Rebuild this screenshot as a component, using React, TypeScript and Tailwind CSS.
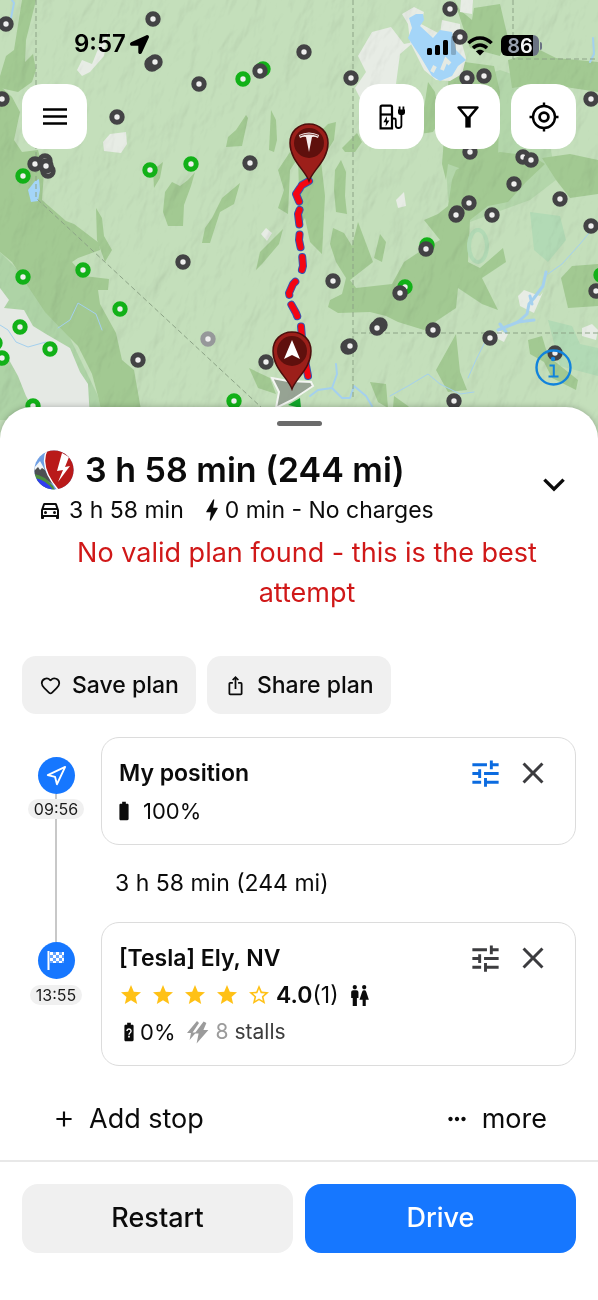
import type { ReactNode } from 'react'
import { Heart, Navigation } from 'lucide-react'
import { FaLocationArrow } from 'react-icons/fa'
import {
  MdBatteryFull,
  MdBatteryUnknown,
  MdBolt,
  MdClose,
  MdIosShare,
  MdMoreHoriz,
  MdAdd,
  MdOutlineDirectionsCar,
  MdStar,
  MdStarBorder,
  MdTune,
  MdWc,
} from 'react-icons/md'

const darkChargers = [
  [6, 24], [153, 19], [152, 64], [155, 62], [199, 84], [2, 99], [117, 117],
  [35, 164], [45, 161], [48, 171], [46, 166], [250, 163], [304, 52], [351, 78],
  [450, 9], [460, 37], [467, 78], [484, 76], [591, 99], [470, 152], [523, 157],
  [531, 160], [514, 184], [560, 199], [457, 213], [456, 215], [469, 203], [492, 215], [591, 226],
  [333, 281], [380, 325], [377, 328], [433, 330], [348, 347], [350, 346], [490, 338],
  [596, 291], [454, 401], [555, 353], [183, 262], [138, 360], [266, 362],
]

const greenChargers = [
  [243, 79], [263, 69], [23, 176], [150, 170], [191, 164], [427, 245], [405, 287],
  [601, 275], [83, 270], [23, 277], [120, 309], [20, 327], [50, 349], [-5, 343],
  [2, 358], [33, 406], [234, 401],
]

// these sit on top of a green one
const coveringChargers = [[260, 71], [426, 249], [400, 293]]

const forests = [
  'M0 86 L12 97 L20 112 L14 140 L22 152 L38 150 L44 172 L42 200 L66 221 L74 224 L82 230 L99 243 L100 250 L78 258 L72 262 L84 276 L109 279 L108 290 L98 290 L100 304 L116 333 L122 360 L134 370 L141 410 L103 420 L98 396 L92 374 L78 346 L70 338 L45 312 L25 282 L12 262 L0 252 Z',
  'M22 0 L36 0 L26 40 L25 62 L33 54 L36 70 L32 82 L18 92 L0 88 L0 76 L6 56 L14 50 Z',
  'M246 115 L248 118 L242 146 L226 147 L228 137 L236 130 Z',
  'M271 110 L276 120 L277 140 L274 152 L269 150 Z',
  'M163 162 L160 178 L154 188 L153 170 Z',
  'M172 182 L180 186 L188 180 L195 172 L191 186 L184 205 L183 226 L168 226 L163 212 L165 192 Z',
  'M222 198 L240 183 L234 204 L220 212 L210 243 L202 243 L205 228 L212 218 Z',
  'M278 170 L290 152 L298 158 L290 170 L288 214 L278 208 L284 190 Z',
  'M283 229 L279 244 L262 264 L256 270 L260 252 Z',
  'M96 208 L102 218 L104 236 L112 250 L105 262 L97 240 Z',
  'M298 156 L307 164 L320 152 L325 196 L322 254 L310 242 L305 218 L300 226 Z',
  'M312 140 L328 124 L336 122 L334 140 L324 156 Z',
  'M335 170 L341 160 L346 172 L345 196 L347 214 L336 212 L334 190 Z',
  'M357 133 L362 142 L355 152 L345 152 L342 148 Z',
  'M333 228 L344 233 L352 246 L358 222 L373 262 L350 280 L356 288 L392 284 L404 262 L422 250 L440 240 L424 220 L438 214 L448 206 L452 180 L456 170 L474 160 L500 152 L532 156 L545 164 L526 182 L508 202 L488 206 L470 220 L468 262 L480 268 L503 248 L506 262 L482 278 L498 310 L482 304 L458 288 L456 308 L438 320 L424 330 L398 322 L386 316 L370 312 L338 313 L328 307 L330 300 L342 294 L346 278 L336 262 L330 244 Z',
  'M380 234 L386 242 L382 262 L374 258 Z',
  'M428 82 L435 92 L440 120 L433 132 L420 134 L424 108 Z',
  'M454 0 L460 10 L472 20 L474 8 L500 4 L508 38 L500 56 L470 48 Z',
  'M508 60 L540 50 L556 58 L598 62 L598 92 L572 88 L540 84 L512 88 Z',
  'M542 158 L570 154 L598 160 L598 194 L570 198 L556 180 Z',
  'M450 60 L494 66 L500 92 L498 156 L470 172 L448 164 L446 180 L442 164 Z',
  'M561 278 L572 266 L598 264 L598 306 L568 308 Z',
  'M456 334 L460 372 L467 390 L448 392 L436 370 Z',
  'M528 340 L542 336 L548 356 L578 380 L576 390 L552 378 L544 362 L530 354 Z',
  'M370 382 L386 384 L388 408 L378 402 Z',
  'M394 396 L408 406 L420 420 L392 420 Z',
  'M249 368 L270 378 L276 394 L258 388 Z',
]

const saltFlats = [
  'M108 32 L104 56 L90 72 L82 76 L77 70 L82 60 L92 64 L100 44 Z',
  'M103 142 L110 134 L126 132 L127 144 L121 153 L104 151 Z',
  'M372 32 L391 27 L404 44 L414 42 L400 54 L396 84 L380 100 L360 98 L355 88 L366 72 L358 56 Z',
  'M402 14 L414 7 L424 12 L421 24 L440 34 L442 20 L460 24 L461 40 L466 58 L462 74 L450 81 L436 80 L424 70 L410 42 L408 24 Z',
  'M461 0 L473 0 L472 14 L460 12 Z',
  'M396 200 L404 192 L406 206 L398 208 Z',
  'M518 296 L524 290 L540 296 L543 292 L534 313 L520 306 Z',
  'M498 330 L508 334 L504 342 L496 338 Z',
  'M582 328 L592 324 L598 330 L596 340 L582 336 Z',
  'M261 234 L266 228 L272 233 L267 241 Z',
  'M0 288 L9 300 L4 308 L24 310 L33 326 L46 334 L70 348 L80 372 L88 384 L90 420 L40 420 L26 396 L18 376 L8 358 L0 352 Z',
]

const lakes = [
  'M409 18 L416 14 L423 14 L424 20 L420 26 L433 38 L440 30 L452 32 L456 50 L466 60 L458 66 L452 76 L440 81 L432 76 L420 56 L408 38 L412 28 Z',
  'M35 181 L39 179 L40 190 L38 201 L31 202 L28 190 Z',
]

function Terrain() {
  return (
    <>
      <defs>
        <filter id="relief" x="0" y="0" width="100%" height="100%">
          <feTurbulence type="fractalNoise" baseFrequency="0.06 0.025" numOctaves="4" seed="12" result="noise" />
          <feDiffuseLighting in="noise" surfaceScale="3" diffuseConstant="1.15" lightingColor="#ffffff">
            <feDistantLight azimuth="220" elevation="60" />
          </feDiffuseLighting>
        </filter>
      </defs>
      <rect width="598" height="440" fill="#c4dfbb" />
      <path d="M0 252 L30 282 L70 338 L98 396 L103 420 L0 420 Z" fill="#aed3a6" />
      <path d="M442 90 L500 70 L540 84 L556 180 L530 200 L470 222 L448 200 Z" fill="#b3d6aa" />
      <path d="M530 212 L560 216 L566 240 L548 262 L534 250 Z" fill="#b2dab5" />
      <path d="M548 320 L572 326 L580 344 L598 348 L598 376 L560 366 Z" fill="#b2dab5" />
      {forests.map((d) => <path key={d} d={d} fill="#a2c992" />)}
      {saltFlats.slice(0, -1).map((d) => <path key={d} d={d} fill="#e7ece5" />)}
      <ellipse cx="478" cy="246" rx="9" ry="16" fill="#c4dfbb" stroke="#b2dab5" strokeWidth="4" />
      <g className="mix-blend-multiply" opacity="0.28">
        <rect width="598" height="440" filter="url(#relief)" transform="rotate(14 299 220) scale(1.3) translate(-70 -60)" />
      </g>
      <path d={saltFlats[saltFlats.length - 1]} fill="#e5e9e4" />
      {lakes.map((d) => <path key={d} d={d} fill="#a4d5f8" />)}
      <path d="M442 70 L446 60 L450 64 M432 72 L435 66" fill="none" stroke="#e5eae3" strokeWidth="4" />
      <g fill="none" stroke="#a4d0ee" strokeLinecap="round" strokeLinejoin="round">
        <path d="M546 272 L543 286 L534 298 L529 304 L527 314 L518 322 L508 326 L498 330" strokeWidth="3" />
        <path d="M530 296 L532 304 M500 324 L506 332 M518 322 L534 320" strokeWidth="3" />
        <path d="M598 222 L580 244 L562 264 L548 274 M486 340 L476 360 L468 378" strokeWidth="1" />
        <path d="M336 364 L337 374 L332 388 L318 390 L310 396 M332 388 L342 398 L350 398 L354 386 L366 396 L372 406" strokeWidth="2" />
        <path d="M390 396 L408 386 L428 374 L440 384 L460 394 L474 392" strokeWidth="1" />
        <path d="M0 325 L8 330 L16 342 L28 347 L46 342 M58 328 L70 320 L78 303 L96 314 L102 330" strokeWidth="1" />
        <path d="M593 38 L594 54 L590 62 M12 0 L14 3 L11 18" strokeWidth="2" />
      </g>
      <path
        d="M36 0 V198 L262 408 M353 0 V400 M513 0 V59 H598 M353 333 H598"
        fill="none"
        stroke="#8ca386"
        strokeWidth="1"
        strokeDasharray="5 3"
      />
    </>
  )
}

function Charger({ x, y, color }: { x: number; y: number; color: string }) {
  return <circle cx={x} cy={y} r="5.2" fill="#efefef" stroke={color} strokeWidth="5" />
}

function PinShape() {
  return (
    <>
      <path
        d="M0 0 C-4 -11 -19 -21 -19 -38 C-19 -49 -11 -57 0 -57 C11 -57 19 -49 19 -38 C19 -21 4 -11 0 0 Z"
        fill="#9c1f1a"
        stroke="#4c0f0d"
        strokeWidth="1.5"
      />
      <circle cx="0" cy="-38" r="15" fill="#5f100d" />
    </>
  )
}

function RouteMap() {
  const route =
    'M309 181 L302 185 L296 194 L301 206 L298 214 L300 230 L299 240 L302 254 L303 266 L300 277 L293 284 L289 293 L291 304 L296 313 L301 326 L303 350 L308 376'
  return (
    <svg
      className="absolute inset-0 h-full w-full"
      viewBox="0 0 598 440"
      preserveAspectRatio="xMidYMin slice"
      aria-hidden="true"
    >
      <Terrain />
      {greenChargers.map(([x, y]) => <Charger key={`${x}-${y}`} x={x} y={y} color="#12b118" />)}
      {[...darkChargers, ...coveringChargers].map(([x, y]) => (
        <Charger key={`${x}-${y}`} x={x} y={y} color="#434345" />
      ))}
      <Charger x={208} y={339} color="#96989a" />
      <g fill="none" strokeLinecap="round" strokeLinejoin="round" strokeDasharray="9 3 15 9 15 10 13 10 13 14 15 10 13 11 200">
        <path d={route} stroke="#3454b4" strokeWidth="8" />
        <path d={route} stroke="#f40612" strokeWidth="6" />
      </g>
      <path
        d="M272 378 L288 381 L311 382 L313 386 L292 400 L276 408 L279 392 Z"
        fill="#8b938a"
        fillOpacity="0.8"
        stroke="#f3f5f2"
        strokeWidth="2"
      />
      <path d="M288 405 L300 398 L301 408 Z" fill="#12a52a" />
      <g transform="translate(309 181)">
        <PinShape />
        <path d="M-10 -46 Q0 -51 10 -46 L9 -43 Q5 -45 3 -44 L0 -29 L-3 -44 Q-5 -45 -9 -43 Z" fill="#f6eeee" />
        <path d="M-9 -45 Q0 -49 9 -45" fill="none" stroke="#5f100d" strokeWidth="0.8" />
      </g>
      <g transform="translate(292 389)">
        <PinShape />
        <path d="M0 -49 L8 -30 L0 -34 L-8 -30 Z" fill="#ffffff" />
      </g>
    </svg>
  )
}

function StatusBar() {
  return (
    <div className="relative flex h-11 items-end justify-between pr-14 pl-[74px] text-black">
      <div className="flex items-center gap-1">
        <span className="text-2xl leading-6 font-semibold">9:57</span>
        <FaLocationArrow size={19} />
      </div>
      <div className="flex items-center gap-2">
        <svg width="32" height="20" viewBox="0 0 32 20" aria-hidden="true">
          <rect x="0" y="12" width="5" height="7" rx="1.5" />
          <rect x="8" y="9" width="5" height="10" rx="1.5" />
          <rect x="16" y="4" width="5" height="15" rx="1.5" />
          <rect x="24" y="0" width="5" height="19" rx="1.5" fillOpacity="0.2" />
        </svg>
        <svg width="26" height="20" viewBox="0 0 26 20" fill="none" stroke="currentColor" strokeWidth="3.4" aria-hidden="true">
          <path d="M1.4 7.2 C8 0.2 18 0.2 24.6 7.2" />
          <path d="M6 12 C10 8 16 8 20 12" />
          <path d="M13 19.5 L8.8 15.3 C11 13.2 15 13.2 17.2 15.3 Z" fill="currentColor" stroke="none" />
        </svg>
        <div className="flex items-center gap-px">
          <span className="flex h-[21px] w-[38px] items-center justify-center rounded-md bg-linear-to-r from-black from-85% to-gray-500 to-85% text-xl leading-5 font-semibold text-gray-100">
            <span className="text-gray-400">8</span>6
          </span>
          <span className="h-2 w-[2px] rounded-r bg-gray-500" />
        </div>
      </div>
    </div>
  )
}

function MapButton({ label, children }: { label: string; children: ReactNode }) {
  return (
    <button
      type="button"
      aria-label={label}
      className="flex h-[65px] w-[65px] items-center justify-center rounded-[20px] bg-white text-black"
    >
      {children}
    </button>
  )
}

function ChargingPumpIcon() {
  return (
    <svg width="26" height="26" viewBox="0 0 26 26" fill="none" stroke="currentColor" strokeWidth="2.2">
      <path d="M1.6 24.4 V3 Q1.6 1.6 3 1.6 H11.6 Q13 1.6 13 3 V24.4 Z" />
      <path d="M2 10.5 H13" />
      <path d="M13 14.5 H15.4 Q16.8 14.5 16.8 16 V21.5 Q16.8 24 19.4 24 Q22.4 24 22.4 21.5 V10" strokeWidth="1.8" />
      <path d="M19 5.6 H26 V8.4 Q26 10.6 24 11 H21 Q19 10.6 19 8.4 Z" fill="currentColor" stroke="none" />
      <path d="M20.6 2.4 V7 M24.4 2.4 V7" strokeWidth="1.8" />
      <path d="M8 12.2 L4.4 18.2 H7 L6.6 22.4 L10.4 16.6 H7.8 Z" fill="currentColor" stroke="none" />
    </svg>
  )
}

function FunnelIcon() {
  return (
    <svg width="24" height="24" viewBox="0 0 24 24" fill="none" stroke="currentColor" strokeLinejoin="round">
      <path d="M2.6 2.5 H21.4 L12.6 13 H11.4 Z" strokeWidth="2.6" />
      <path d="M12 12.4 V22.6" strokeWidth="5.4" />
    </svg>
  )
}

function CrosshairIcon() {
  return (
    <svg width="30" height="30" viewBox="0 0 30 30" fill="none" stroke="currentColor" strokeWidth="2.4">
      <circle cx="15" cy="15" r="11" />
      <circle cx="15" cy="15" r="4.4" strokeWidth="2.8" />
      <path d="M15 0.5 V5 M15 25 V29.5 M0.5 15 H5 M25 15 H29.5" />
    </svg>
  )
}

function PlannerLogo() {
  return (
    <svg width="40" height="40" viewBox="0 0 40 40" aria-hidden="true">
      <clipPath id="logo-clip">
        <circle cx="20" cy="20" r="19.6" />
      </clipPath>
      <g clipPath="url(#logo-clip)">
        <rect width="40" height="40" fill="#6f9fe4" />
        <path d="M0 19 L5 14 L10 18 L14 26 L22 36 L14 31 L0 25 Z" fill="#4d5052" />
        <path d="M0 18 L6 11 L11 20 L8 18 L6 20 L4 17 L0 21 Z" fill="#f3f6f8" />
        <path d="M0 24 Q10 25 19 36 L21 40 L0 40 Z" fill="#4c8f3f" />
        <path d="M1 28 Q12 30 19 40 H6 Z" fill="#2f3df0" />
        <path d="M12 -1 H41 V41 H25 Q11 25 10.5 11 Q10.5 5 13 0 Z" fill="#b91a1a" stroke="#ffffff" strokeWidth="1.4" />
        <path d="M28 3 L23 21 L29 20 L24 32 L36 16 L31 17 L35 7 Z" fill="#ffffff" />
      </g>
    </svg>
  )
}

function CheckeredFlagIcon() {
  return (
    <svg width="18" height="19" viewBox="0 0 18 19" fill="#ffffff" aria-hidden="true">
      <rect x="0.5" y="0" width="2" height="19" />
      <path d="M3 1 H17 V12 H3 Z" opacity="0.35" />
      <path d="M3 1h3v3h-3z M9 1h3v3h-3z M15 1h2v3h-2z M6 4h3v3h-3z M12 4h3v3h-3z M3 7h3v3h-3z M9 7h3v3h-3z M15 7h2v3h-2z M6 10h3v2h-3z M12 10h3v2h-3z" />
    </svg>
  )
}

function DoubleBoltIcon() {
  return (
    <svg width="22" height="24" viewBox="0 0 22 24" fill="currentColor" aria-hidden="true">
      <path d="M10 1 L0 13 H4 L2.6 20 L9 12.4 H5.6 L12 3 Z" />
      <path d="M16.6 1.4 L7.6 13.4 H11.6 L9.6 23.4 L21.4 10 H16.4 L19.4 3 Z" />
    </svg>
  )
}

function StopActions({ active, name }: { active?: boolean; name: string }) {
  return (
    <div className="flex items-center gap-3">
      <button type="button" aria-label={`Settings for ${name}`} className={active ? 'text-[#0b6be0]' : 'text-[#3c3c3f]'}>
        <MdTune size={35} />
      </button>
      <button type="button" aria-label={`Remove ${name}`} className="text-[#3c3c3f]">
        <MdClose size={36} />
      </button>
    </div>
  )
}

function StopBadge({ children }: { children: ReactNode }) {
  return (
    <span className="flex h-[37px] w-[37px] shrink-0 items-center justify-center rounded-full bg-[#1677ff] text-white">
      {children}
    </span>
  )
}

function StopTime({ children }: { children: ReactNode }) {
  return <span className="rounded-full bg-[#f0f0f0] px-1.5 text-base leading-5 text-[#1b1b1b]">{children}</span>
}

export default function App() {
  return (
    <div className="flex min-h-screen flex-col bg-white font-['Inter',sans-serif] text-[#0b0b0b]">
      {/* Map */}
      <div className="relative flex h-[440px] flex-col overflow-hidden pt-3">
        <RouteMap />
        <StatusBar />
        <div className="relative mt-7 flex items-center justify-between px-[22px]">
          <MapButton label="Menu">
            <svg width="24" height="17" viewBox="0 0 24 17" stroke="currentColor" strokeWidth="2.4">
              <path d="M0 1.5 H24 M0 8.5 H24 M0 15.5 H24" />
            </svg>
          </MapButton>
          <div className="flex gap-[11px]">
            <MapButton label="Chargers"><ChargingPumpIcon /></MapButton>
            <MapButton label="Filter"><FunnelIcon /></MapButton>
            <MapButton label="Center map"><CrosshairIcon /></MapButton>
          </div>
        </div>
        <button
          type="button"
          aria-label="Map information"
          className="relative mt-auto mr-[26px] mb-[54px] self-end text-[#1183dc]"
        >
          <svg width="37" height="37" viewBox="0 0 37 37" fill="none" stroke="currentColor" strokeWidth="2.4">
            <circle cx="18.5" cy="18.5" r="17" />
            <circle cx="18" cy="10" r="2.2" fill="currentColor" stroke="none" />
            <path d="M14.5 16.5 H18.8 V27 M13.5 27.5 H23.5" strokeWidth="2" />
          </svg>
        </button>
      </div>

      {/* Plan sheet */}
      <main className="relative -mt-[33px] flex flex-1 flex-col rounded-t-[32px] bg-white shadow-[0_0_6px_rgba(0,0,0,0.25)]">
        <div className="mx-auto mt-3.5 h-[5px] w-[45px] rounded-full bg-[#6b6b6b]" />

        <header className="mt-[22px] flex items-center justify-between pr-[31px] pl-[34px]">
          <div>
            <div className="flex items-center gap-[11px]">
              <PlannerLogo />
              <h1 className="text-[34px] leading-[44px] font-semibold">3 h 58 min (244 mi)</h1>
            </div>
            <p className="flex h-9 items-center pl-1 text-[23px]">
              <MdOutlineDirectionsCar size={24} />
              <span className="ml-[7px]">3 h 58 min</span>
              <MdBolt size={28} className="ml-3.5" />
              <span className="-ml-px">0 min - No charges</span>
            </p>
          </div>
          <button type="button" aria-label="Collapse plan" className="p-0.5 pb-2">
            <svg width="22" height="14" viewBox="0 0 22 14" fill="none" stroke="currentColor" strokeWidth="3.4">
              <path d="M1.4 1.6 L11 11.2 L20.6 1.6" />
            </svg>
          </button>
        </header>

        <p className="mt-[5px] pr-12 pl-16 text-center text-[27px] leading-10 text-[#d01818]">
          No valid plan found - this is the best attempt
        </p>

        <div className="mt-[43px] flex gap-[11px] px-[22px] text-[23px] font-medium">
          <button type="button" className="flex h-[58px] items-center gap-[11px] rounded-[14px] bg-[#f0f0f0] pr-[17px] pl-[18px]">
            <Heart size={21} strokeWidth={2} />
            Save plan
          </button>
          <button type="button" className="flex h-[58px] items-center gap-[11px] rounded-[14px] bg-[#f0f0f0] pr-[17px] pl-[18px]">
            <MdIosShare size={21} />
            Share plan
          </button>
        </div>

        <ol className="mt-[23px] px-[22px] text-[23px]">
          <li className="flex gap-[11px]">
            <div className="flex w-[68px] flex-col items-center pt-5">
              <StopBadge><Navigation size={22} strokeWidth={2} /></StopBadge>
              <span className="h-[5px] w-[2px] bg-[#c8c8c8]" />
              <StopTime>09:56</StopTime>
              <span className="w-[2px] flex-1 bg-[#c8c8c8]" />
            </div>
            <div className="flex-1">
              <section className="rounded-[18px] border border-[#dcdcdc] pt-[17px] pr-6 pb-[13px] pl-[17px]">
                <div className="flex items-center justify-between">
                  <h2 className="font-semibold">My position</h2>
                  <StopActions active name="My position" />
                </div>
                <p className="flex h-10 items-center gap-2.5 text-[22px]">
                  <MdBatteryFull size={22} className="-mx-1.5" />
                  <span className="ml-1">100%</span>
                </p>
              </section>
              <p className="flex h-[77px] items-center pl-3.5">3 h 58 min (244 mi)</p>
            </div>
          </li>
          <li className="flex gap-[11px]">
            <div className="flex w-[68px] flex-col items-center">
              <span className="h-5 w-[2px] bg-[#c8c8c8]" />
              <StopBadge><CheckeredFlagIcon /></StopBadge>
              <span className="h-[6px]" />
              <StopTime>13:55</StopTime>
            </div>
            <section className="flex-1 rounded-[18px] border border-[#dcdcdc] pt-[17px] pr-6 pb-[15px] pl-[17px]">
              <div className="flex items-center justify-between">
                <h2 className="font-semibold">[Tesla] Ely, NV</h2>
                <StopActions name="[Tesla] Ely, NV" />
              </div>
              <div className="flex h-[38px] items-center">
                <span className="mr-[5px] flex gap-2 text-[#ffc116]">
                  {[1, 2, 3, 4].map((n) => <MdStar key={n} size={24} />)}
                  <MdStarBorder size={24} />
                </span>
                <strong className="font-semibold">4.0</strong>
                <span>(1)</span>
                <MdWc size={25} className="ml-2" />
              </div>
              <div className="flex h-9 items-center text-[21px]">
                <MdBatteryUnknown size={22} className="-ml-px" />
                <span className="text-[22px]">0%</span>
                <span className="mr-1.5 ml-3 text-[#9b9b9b]"><DoubleBoltIcon /></span>
                <span className="text-[#9b9b9b]">8</span>
                <span className="ml-1.5 text-[#3c3c3c]">stalls</span>
              </div>
            </section>
          </li>
        </ol>

        <div className="mt-[33px] flex items-center justify-between px-[51px] text-[27px] leading-10">
          <button type="button" className="flex items-center gap-3">
            <MdAdd size={26} />
            Add stop
          </button>
          <button type="button" className="flex items-center gap-3">
            <MdMoreHoriz size={26} />
            more
          </button>
        </div>

        <footer className="mt-[21px] flex gap-3 border-t-2 border-[#e8e8e8] px-[22px] pt-[22px] pb-[47px] text-[27px]">
          <button type="button" className="h-[69px] flex-1 rounded-2xl bg-[#f0f0f0] font-medium">Restart</button>
          <button type="button" className="h-[69px] flex-1 rounded-2xl bg-[#1677ff] font-medium text-white">Drive</button>
        </footer>
      </main>
    </div>
  )
}
